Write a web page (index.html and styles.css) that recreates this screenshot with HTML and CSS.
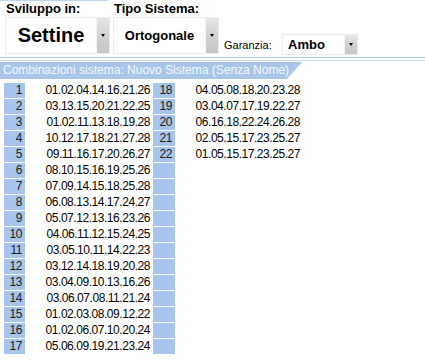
FILE: index.html
```html
<!DOCTYPE html>
<html lang="it">
<head>
    <meta charset="UTF-8">
    <title>Sistema</title>
    <link rel="stylesheet" href="styles.css">
</head>
<body>
    <div class="toolbar">
        <div class="group first">
            <div class="group-label">Sviluppo in:</div>
            <div class="combo big">
                <span class="combo-value">Settine</span>
                <span class="combo-btn"><span class="arrow"></span></span>
            </div>
        </div>
        <div class="group">
            <div class="group-label">Tipo Sistema:</div>
            <div class="combo mid">
                <span class="combo-value">Ortogonale</span>
                <span class="combo-btn"><span class="arrow"></span></span>
            </div>
        </div>
        <div class="guarantee">
            <span class="small-label">Garanzia:</span>
            <div class="combo small">
                <span class="combo-value">Ambo</span>
                <span class="combo-btn"><span class="arrow"></span></span>
            </div>
        </div>
    </div>
    <div class="rule"></div>
    <div class="rule light"></div>
    <div class="tab">Combinazioni sistema: Nuovo Sistema (Senza Nome)</div>
    <div class="combos">
        <div class="row"><span class="num">1</span><span class="seq">01.02.04.14.16.21.26</span><span class="num">18</span><span class="seq">04.05.08.18.20.23.28</span></div>
        <div class="row"><span class="num">2</span><span class="seq">03.13.15.20.21.22.25</span><span class="num">19</span><span class="seq">03.04.07.17.19.22.27</span></div>
        <div class="row"><span class="num">3</span><span class="seq">01.02.11.13.18.19.28</span><span class="num">20</span><span class="seq">06.16.18.22.24.26.28</span></div>
        <div class="row"><span class="num">4</span><span class="seq">10.12.17.18.21.27.28</span><span class="num">21</span><span class="seq">02.05.15.17.23.25.27</span></div>
        <div class="row"><span class="num">5</span><span class="seq">09.11.16.17.20.26.27</span><span class="num">22</span><span class="seq">01.05.15.17.23.25.27</span></div>
        <div class="row"><span class="num">6</span><span class="seq">08.10.15.16.19.25.26</span><span class="num"></span><span class="seq"></span></div>
        <div class="row"><span class="num">7</span><span class="seq">07.09.14.15.18.25.28</span><span class="num"></span><span class="seq"></span></div>
        <div class="row"><span class="num">8</span><span class="seq">06.08.13.14.17.24.27</span><span class="num"></span><span class="seq"></span></div>
        <div class="row"><span class="num">9</span><span class="seq">05.07.12.13.16.23.26</span><span class="num"></span><span class="seq"></span></div>
        <div class="row"><span class="num">10</span><span class="seq">04.06.11.12.15.24.25</span><span class="num"></span><span class="seq"></span></div>
        <div class="row"><span class="num">11</span><span class="seq">03.05.10.11.14.22.23</span><span class="num"></span><span class="seq"></span></div>
        <div class="row"><span class="num">12</span><span class="seq">03.12.14.18.19.20.28</span><span class="num"></span><span class="seq"></span></div>
        <div class="row"><span class="num">13</span><span class="seq">03.04.09.10.13.16.26</span><span class="num"></span><span class="seq"></span></div>
        <div class="row"><span class="num">14</span><span class="seq">03.06.07.08.11.21.24</span><span class="num"></span><span class="seq"></span></div>
        <div class="row"><span class="num">15</span><span class="seq">01.02.03.08.09.12.22</span><span class="num"></span><span class="seq"></span></div>
        <div class="row"><span class="num">16</span><span class="seq">01.02.06.07.10.20.24</span><span class="num"></span><span class="seq"></span></div>
        <div class="row"><span class="num">17</span><span class="seq">05.06.09.19.21.23.24</span><span class="num"></span><span class="seq"></span></div>
    </div>
</body>
</html>
```

FILE: styles.css
```css
body {
    margin: 0;
    background-color: #fff;
    font-family: 'Liberation Sans', Arial, sans-serif;
    color: #000;
}
.toolbar {
    display: flex;
    align-items: flex-start;
    height: 57px;
}
.group {
    display: flex;
    flex-direction: column;
    margin-left: 5px;
}
.group.first {
    border-top: 1px solid #bfd3ee;
    padding-left: 5px;
    margin-left: 0;
    width: 103px;
}
.group-label {
    font-size: 13px;
    font-weight: bold;
    height: 16px;
    line-height: 15px;
    padding-left: 1px;
}
.group:not(.first) .group-label {
    margin-top: 1px;
}
.combo {
    display: flex;
    border: 1px solid #ececec;
    background-color: #fff;
}
.combo.big {
    width: 103px;
    height: 35px;
}
.combo.mid {
    width: 104px;
    height: 35px;
}
.combo.small {
    width: 74px;
    height: 19px;
}
.combo-value {
    flex: 1;
    display: flex;
    align-items: center;
    justify-content: center;
    font-weight: bold;
}
.big .combo-value {
    font-size: 20px;
}
.mid .combo-value {
    font-size: 13px;
}
.small .combo-value {
    font-size: 13px;
    justify-content: flex-start;
    padding-left: 5px;
}
.combo-btn {
    width: 12px;
    display: flex;
    align-items: center;
    justify-content: center;
    background: linear-gradient(to bottom, #e6e6e6, #cfcfcf 60%, #c6c6c6);
    border-left: 1px solid #f4f4f4;
}
.arrow {
    width: 0;
    height: 0;
    border-left: 2px solid transparent;
    border-right: 2px solid transparent;
    border-top: 3px solid #000;
}
.guarantee {
    display: flex;
    align-items: center;
    margin-top: 34px;
    margin-left: 5px;
}
.small-label {
    font-size: 11px;
    width: 58px;
}
.rule {
    height: 1px;
    background-color: #b3cbea;
    margin-bottom: 2px;
}
.rule.light {
    background-color: #c9daf0;
    margin-bottom: 1px;
}
.tab {
    width: 302px;
    height: 17px;
    line-height: 17px;
    padding-left: 3px;
    box-sizing: border-box;
    background-color: #a9c5ea;
    color: #f6f9fd;
    font-size: 12px;
    clip-path: polygon(0 0, 100% 0, calc(100% - 15px) 100%, 0 100%);
}
.combos {
    margin: 4px 0 0 4px;
    display: flex;
    flex-direction: column;
    gap: 1px;
}
.row {
    display: grid;
    grid-template-columns: 21px 128px 22px 128px;
    height: 15px;
    font-size: 12px;
    letter-spacing: -0.45px;
    line-height: 15px;
}
.num {
    background-color: #a6c4ec;
    text-align: right;
    padding-right: 3px;
    color: #222;
}
.seq {
    text-align: right;
    padding-right: 3px;
}
```
